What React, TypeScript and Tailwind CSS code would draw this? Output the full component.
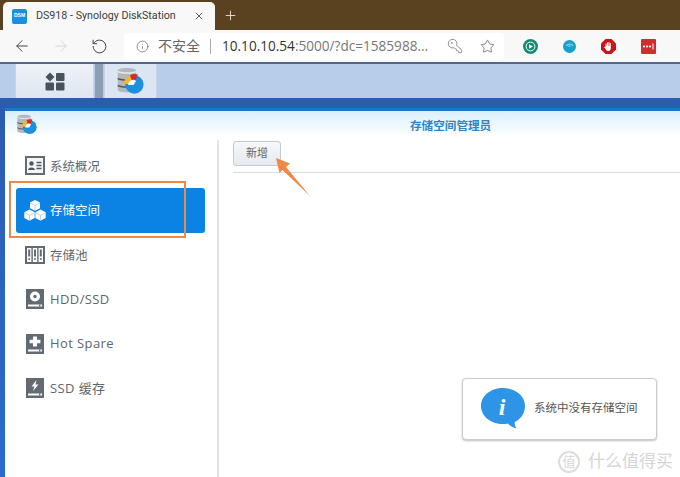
import { ArrowLeft, ArrowRight, Info, KeyRound, Plus, RotateCw, Star, X } from 'lucide-react';

const cjk = "font-['Liberation_Sans','Noto_Sans_CJK_SC',sans-serif]";

const AppIcon = ({ size }: { size: number }) => (
  <svg width={size} height={size} viewBox="0 0 32 32">
    <path d="M2 4c0-4 21-4 21 0v22c0 4-21 4-21 0z" fill="#b4b8bc" />
    <path d="M2 5c3 2.500 18 2.500 21 0" fill="none" stroke="#e6e8ea" strokeWidth="1.500" />
    <path d="M2 13c3 2.500 18 2.500 21 0M2 21c3 2.500 18 2.500 21 0" fill="none" stroke="#4c5560" strokeWidth="1.500" />
    <circle cx="21" cy="20" r="10.500" fill="#1b8fe0" />
    <path d="M20 20L9 19a11 11 0 0 1 7-9.500z" fill="#f5b52e" />
    <path d="M20 20L16 9.500A11 11 0 0 1 25 8.500z" fill="#d62a2a" />
    <path d="M14 20.500a5.500 5.500 0 0 1 9-4.500l-3 4.500z" fill="#fff" />
  </svg>
);

const OverviewIcon = () => (
  <svg width="20" height="19" viewBox="0 0 20 19">
    <rect x="1" y="1" width="18" height="17" fill="#f4f5f6" stroke="#626a72" strokeWidth="2" />
    <circle cx="6.500" cy="7.500" r="2.200" fill="#50575e" />
    <path d="M3 14c0-3.500 7-3.500 7 0z" fill="#50575e" />
    <path d="M11.500 6.500h5M11.500 9.500h5M11.500 12.500h5" stroke="#50575e" strokeWidth="1.400" />
  </svg>
);

const CubesIcon = () => (
  <svg width="22" height="21" viewBox="0 0 22 21" fill="#fff">
    <path d="M11 0l5 2.600v5.600L11 10.800 6 8.200V2.600z" />
    <path d="M5.500 9.600l5.200 2.700v5.800L5.500 20.800.3 18.100v-5.800z" />
    <path d="M16.500 9.600l5.200 2.700v5.800l-5.200 2.700-5.200-2.700v-5.800z" />
    <path d="M6 2.900l5 2.600 5-2.600M11 5.500v5M.3 12.600l5.200 2.700 5.200-2.700M5.500 15.300v5.500M11.300 12.600l5.200 2.700 5.200-2.700M16.500 15.300v5.500" stroke="#7cc0f0" strokeWidth="0.600" fill="none" />
  </svg>
);

const PoolIcon = () => (
  <svg width="20" height="18" viewBox="0 0 20 18">
    <rect width="20" height="18" fill="#626a72" />
    <rect x="2" y="2" width="4.400" height="14" fill="#fff" />
    <rect x="7.800" y="2" width="4.400" height="14" fill="#fff" />
    <rect x="13.600" y="2" width="4.400" height="14" fill="#fff" />
    <path d="M4.200 3.500v7M10 3.500v7M15.800 3.500v7" stroke="#626a72" strokeWidth="2" />
    <circle cx="4.200" cy="13" r="1" fill="#626a72" />
    <circle cx="10" cy="13" r="1" fill="#626a72" />
    <circle cx="15.800" cy="13" r="1" fill="#626a72" />
  </svg>
);

const DriveIcon = ({ children }: { children: React.ReactNode }) => (
  <svg width="18" height="20" viewBox="0 0 18 20">
    <rect width="18" height="20" fill="#626a72" />
    <rect x="2" y="15.500" width="14" height="2" fill="#fff" />
    <rect x="13" y="15.500" width="1.400" height="2" fill="#626a72" />
    {children}
  </svg>
);

const navItems = [
  { label: '系统概况', icon: <OverviewIcon /> },
  { label: '存储空间', icon: <CubesIcon />, active: true },
  { label: '存储池', icon: <PoolIcon /> },
  {
    label: 'HDD/SSD',
    latin: true,
    icon: (
      <DriveIcon>
        <circle cx="9" cy="7.500" r="5" fill="#fff" />
        <circle cx="9" cy="7.500" r="1.700" fill="#626a72" />
      </DriveIcon>
    ),
  },
  {
    label: 'Hot Spare',
    latin: true,
    icon: (
      <DriveIcon>
        <path d="M7 2.500h4v3.200h3.400v3.600H11v3.200H7V9.300H3.600V5.700H7z" fill="#fff" />
      </DriveIcon>
    ),
  },
  {
    label: 'SSD 缓存',
    latin: true,
    icon: (
      <DriveIcon>
        <path d="M10.500 2L5.500 8.500h3L7 13l5.500-6.500h-3z" fill="#fff" />
      </DriveIcon>
    ),
  },
];

export default function App() {
  return (
    <div className={`relative w-[680px] h-[477px] overflow-hidden flex flex-col bg-white ${cjk}`}>
      {/* Browser tabs */}
      <div className="h-[30px] shrink-0 bg-[#5a4220] flex items-end pl-[3px]">
        <div className="w-[212px] h-[28px] bg-[#f8f8f8] rounded-t-[5px] flex items-center pl-[9px] pr-[5px]">
          <div className="w-[15px] h-[15px] rounded-[2px] bg-[#1b8fe0] text-white text-[5px] font-bold flex items-center justify-center">DSM</div>
          <span className="ml-[9px] text-[10.7px] text-[#3c3c3c] font-['Roboto',sans-serif] whitespace-nowrap">DS918 - Synology DiskStation</span>
          <X className="ml-auto mr-[5px] text-[#333]" size={12} strokeWidth={1.6} />
        </div>
        <Plus className="ml-[8px] mb-[7px] text-[#efe9df]" size={15} strokeWidth={1.4} />
      </div>

      {/* Browser toolbar */}
      <div className="h-[34px] shrink-0 bg-[#f8f8f8] border-b-[2px] border-[#56678a] flex items-center pl-[13px]">
        <ArrowLeft className="text-[#444]" size={18} strokeWidth={1.3} />
        <ArrowRight className="ml-[21px] text-[#d4d4d4]" size={18} strokeWidth={1.3} />
        <RotateCw className="ml-[21px] text-[#444] -scale-x-100" size={17} strokeWidth={1.4} />
        <div className="ml-[16px] w-[380px] h-[27px] bg-white rounded-[4px] flex items-center pl-[12px]">
          <Info className="text-[#777]" size={13} strokeWidth={1.5} />
          <span className="ml-[9px] text-[14px] text-[#666] whitespace-nowrap">不安全</span>
          <span className="ml-[10px] w-px h-[15px] bg-[#aaa]" />
          <span className="ml-[11px] text-[13.6px] text-[#333] font-['Open_Sans',sans-serif] whitespace-nowrap">
            10.10.10.54<span className="text-[#777]">:5000/?dc=1585988...</span>
          </span>
          <KeyRound className="ml-[19px] text-[#777] -scale-x-100" size={16} strokeWidth={1.2} />
          <Star className="ml-[17px] text-[#666]" size={15} strokeWidth={1.3} />
        </div>
        <svg className="ml-[19px]" width="15" height="15" viewBox="0 0 15 15">
          <circle cx="7.500" cy="7.500" r="7.500" fill="#168a73" />
          <circle cx="7.500" cy="7.500" r="4.400" fill="none" stroke="#fff" />
          <path d="M6 5.200l4 2.300-4 2.300z" fill="#fff" />
        </svg>
        <div className="ml-[25px] w-[13px] h-[13px] rounded-full bg-[#14a0c8] text-white text-[5px] flex items-center justify-center">&lt;/&gt;</div>
        <svg className="ml-[25px]" width="15" height="15" viewBox="0 0 15 15">
          <path d="M4.500 0h6L15 4.500v6L10.500 15h-6L0 10.500v-6z" fill="#c8161c" />
          <path d="M4.600 8V4.600h1V7h.4V3.400h1V7h.4V3h1v4h.4V4h1v5.500c0 1.500-1 2.500-2.500 2.500-1.200 0-1.800-.6-2.400-1.600L3.200 8.200l.8-.6z" fill="#fff" />
        </svg>
        <svg className="ml-[25px]" width="15" height="15" viewBox="0 0 15 15">
          <rect width="15" height="15" rx="1" fill="#cf2e2e" />
          <circle cx="3" cy="7.500" r="1.100" fill="#fff" />
          <circle cx="6" cy="7.500" r="1.100" fill="#fff" />
          <circle cx="9" cy="7.500" r="1.100" fill="#fff" />
          <rect x="11.500" y="4.500" width="1" height="6" fill="#fff" />
        </svg>
      </div>

      {/* DSM taskbar */}
      <div className="h-[34px] shrink-0 bg-[#b8cdea] flex pl-[15px]">
        <div className="w-[79px] bg-gradient-to-b from-[#eef2f8] to-[#dfe6f1] border-x border-[#c8d2e0] flex items-center justify-center">
          <svg width="20" height="19" viewBox="0 0 20 19" fill="#47525e">
            <path d="M5 0.500l4.500 4.500L5 9.500.5 5z" />
            <rect x="11" y="1" width="8.500" height="8" rx="1" />
            <rect x="0.500" y="10.500" width="8.500" height="8" rx="1" />
            <rect x="11" y="10.500" width="8.500" height="8" rx="1" />
          </svg>
        </div>
        <div className="ml-[1px] w-[8px] bg-[#8d9db5]" />
        <div className="ml-px w-[53px] bg-[#dbe5f3] border-x border-[#c8d2e0] flex items-center justify-center pr-[2px]">
          <AppIcon size={28} />
        </div>
      </div>

      {/* DSM desktop + window */}
      <div className="flex-1 min-h-0 bg-gradient-to-b from-[#2a5cb0] to-[#2a6ccb] pt-[13px] pl-[5px] flex flex-col">
        <div className="h-[3px] -mt-[3px] bg-[#1a78cc] shrink-0" />
        <div className="flex-1 min-h-0 flex flex-col bg-white">
          <div className="h-[26px] shrink-0 bg-gradient-to-b from-[#d9f0fb] to-white flex items-center pl-[11px]">
            <AppIcon size={21} />
            <span className="ml-[373px] mt-[3px] text-[11.6px] font-bold text-[#2d84c8] whitespace-nowrap">存储空间管理员</span>
          </div>
          <div className="flex-1 min-h-0 flex">
            {/* Sidebar */}
            <div className="w-[214px] shrink-0 border-r-2 border-[#e2e4e6] mt-[3px] pl-[11px] pt-[3.5px] pr-[12px] flex flex-col">
              {navItems.map((item) => (
                <div
                  key={item.label}
                  className={`h-[44.5px] shrink-0 flex items-center pl-[8px] rounded-[3px] ${item.active ? 'bg-[#0b83e4] text-white' : 'text-[#5f666d]'}`}
                >
                  <div className="w-[22px] flex justify-center">{item.icon}</div>
                  <span className={`ml-[4px] whitespace-nowrap font-['Open_Sans','Noto_Sans_CJK_SC',sans-serif] ${item.latin ? 'text-[13px] tracking-[0.4px]' : 'text-[12.5px] mt-[3px]'}`}>{item.label}</span>
                </div>
              ))}
            </div>

            {/* Main area */}
            <div className="flex-1 min-w-0 pl-[14px] pt-[3px]">
              <button className="w-[48px] h-[25px] rounded-[3px] border border-[#c3cad1] bg-gradient-to-b from-[#f6f8fa] to-[#e6eaee] text-[11px] text-[#5f666d]">新增</button>
              <div className="mt-[6px] h-px bg-[#d9dcdf]" />
            </div>
          </div>
        </div>
      </div>

      {/* Annotation: orange frame */}
      <div className="absolute left-[9px] top-[181px] w-[177px] h-[57px] border-2 border-[#ee8a45]" />
      {/* Annotation: arrow */}
      <svg className="absolute left-[272px] top-[155px]" width="42" height="44" viewBox="0 0 42 44">
        <path d="M4 3l14 5.500-4 3.500L38 41 10.500 15 7.500 18z" fill="#ee8a45" />
      </svg>

      {/* Toast */}
      <div className="absolute left-[462px] top-[378px] w-[195px] h-[62px] bg-white rounded-[4px] border border-[#c9cdd2] shadow-[0_1px_2px_rgba(0,0,0,0.25)] flex items-center pl-[18px]">
        <svg width="44" height="52" viewBox="0 0 44 52">
          <path d="M22 5C10 5 0 12.500 0 23c0 10.500 10 18 22 18 1.700 0 3.300-.1 4.900-.5 2 2.400 5 4.300 8.600 5-1.300-2-1.900-4-1.800-6.500C39.500 36.500 44 30.500 44 23 44 12.500 34 5 22 5z" fill="#2e95e6" />
          <text x="21" y="32" fontSize="24" fontWeight="700" fontStyle="italic" fontFamily="Liberation Serif, serif" fill="#fff" textAnchor="middle">i</text>
        </svg>
        <span className="ml-[9px] text-[11.5px] text-[#555] whitespace-nowrap">系统中没有存储空间</span>
      </div>

      {/* Watermark */}
      <div className="absolute left-[558px] top-[449px] flex items-center text-[#d6d6d6]">
        <div className="w-[22px] h-[22px] rounded-full border-2 border-[#dcdcdc] text-[13px] flex items-center justify-center">值</div>
        <span className="ml-[8px] text-[17px] whitespace-nowrap">什么值得买</span>
      </div>
    </div>
  );
}
